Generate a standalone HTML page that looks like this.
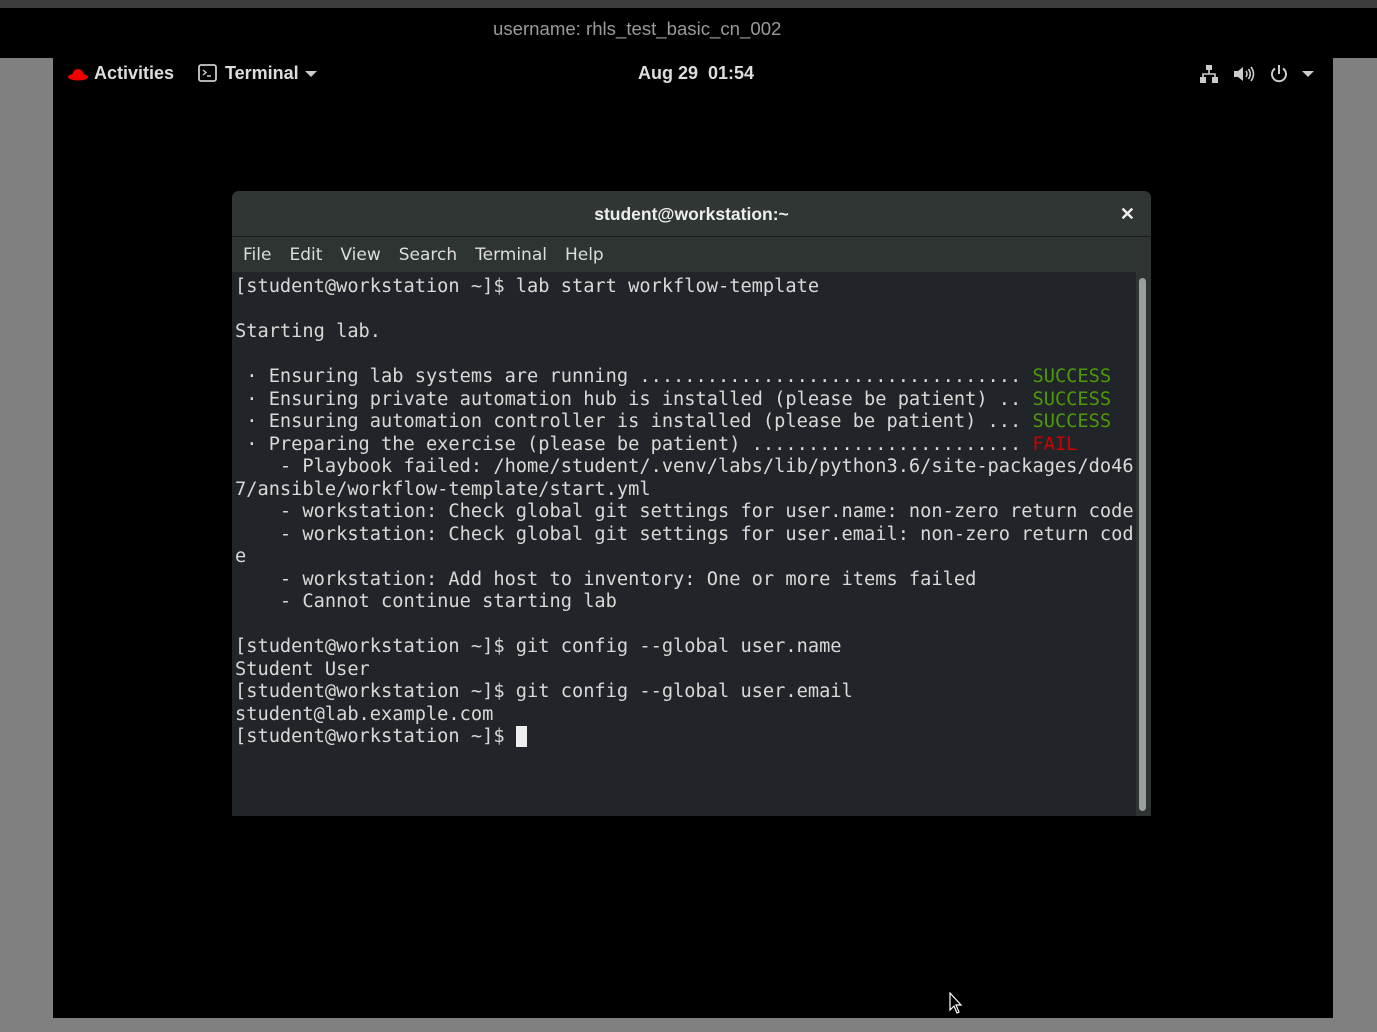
<!DOCTYPE html>
<html><head><meta charset="utf-8"><style>
*{margin:0;padding:0;box-sizing:border-box}
body{width:1377px;height:1032px;background:#808080;position:relative;overflow:hidden;font-family:"DejaVu Sans","Liberation Sans",sans-serif}
#top{position:absolute;left:0;top:0;width:1377px;height:8px;background:#3c3c3c}
#hdr{position:absolute;left:0;top:8px;width:1377px;height:50px;background:#000}
#user{position:absolute;left:493px;top:10px;color:#9a9a9a;font-family:"Liberation Sans",sans-serif;font-size:18.6px}
#screen{position:absolute;left:53px;top:58px;width:1280px;height:960px;background:#000}
.tb{position:absolute;color:#ddd;font-size:18px;font-weight:bold;top:63px;font-family:"Liberation Sans",sans-serif}
#win{position:absolute;left:232px;top:191px;width:919px;height:625px;background:#212529;border-radius:7px 7px 0 0;overflow:hidden}
#title{height:46px;background:#2f3634;border-bottom:1px solid #1c1f1f;text-align:center;color:#eee;font-weight:bold;font-size:17.5px;line-height:46px;font-family:"Liberation Sans",sans-serif}
#menu{height:35px;background:#2d3432;color:#ddd;font-size:17px;line-height:37px;padding-left:11px}
#menu span{margin-right:18px}
#term{position:absolute;left:3px;top:85px;font-family:"DejaVu Sans Mono",monospace;font-size:18.66px;line-height:22.5px;color:#d8dad8;white-space:pre}
.g{color:#4e9a06}.r{color:#cc0000}
#trough{position:absolute;left:904px;top:81px;width:15px;height:544px;background:#2d3432}
#thumb{position:absolute;left:907px;top:87px;width:7px;height:533px;background:#9a9f9c;border-radius:4px}
</style></head><body>
<div id="top"></div><div id="hdr"><div id="user">username: rhls_test_basic_cn_002</div></div>
<div id="screen"></div>
<svg style="position:absolute;left:67px;top:66px" width="22" height="16" viewBox="0 0 22 16"><ellipse cx="11" cy="11" rx="10" ry="3.5" fill="#e00"/><path d="M5 10 Q6 3 11 3 Q16 3 17 10 Z" fill="#e00"/></svg>
<div class="tb" style="left:94px">Activities</div>
<svg style="position:absolute;left:198px;top:64px" width="20" height="19" viewBox="0 0 20 19"><rect x="1" y="1" width="17" height="16" rx="2" fill="none" stroke="#ccc" stroke-width="1.8"/><path d="M5 6 L8 8.5 L5 11 M9 12 H13" stroke="#ccc" stroke-width="1.4" fill="none"/></svg>
<div class="tb" style="left:225px">Terminal</div>
<svg style="position:absolute;left:305px;top:71px" width="12" height="7"><path d="M0 0 H12 L6 6Z" fill="#ccc"/></svg>
<div class="tb" style="left:638px">Aug 29&nbsp; 01:54</div>
<svg style="position:absolute;left:1199px;top:64px" width="20" height="20" viewBox="0 0 20 20"><rect x="7" y="1" width="6" height="5" fill="#ccc"/><rect x="1" y="13" width="6" height="6" fill="#ccc"/><rect x="13" y="13" width="6" height="6" fill="#ccc"/><path d="M10 6V10M4 13V10H16V13" stroke="#ccc" stroke-width="1.6" fill="none"/></svg>
<svg style="position:absolute;left:1233px;top:65px" width="22" height="18" viewBox="0 0 22 18"><path d="M1 6H5L10 2V16L5 12H1Z" fill="#ccc"/><path d="M13 6Q15 9 13 12M15.5 4Q19 9 15.5 14M18 2Q23 9 18 16" stroke="#ccc" stroke-width="1.6" fill="none"/></svg>
<svg style="position:absolute;left:1269px;top:64px" width="20" height="20" viewBox="0 0 20 20"><path d="M6 4.5A7 7 0 1 0 14 4.5" stroke="#ccc" stroke-width="2" fill="none"/><path d="M10 1V10" stroke="#ccc" stroke-width="2"/></svg>
<svg style="position:absolute;left:1302px;top:71px" width="12" height="7"><path d="M0 0 H12 L6 6Z" fill="#ccc"/></svg>
<div id="win">
<div id="title">student@workstation:~<span style="position:absolute;right:16px;top:0;font-size:18px">✕</span></div>
<div id="menu"><span>File</span><span>Edit</span><span>View</span><span>Search</span><span>Terminal</span><span>Help</span></div>
<div id="term">[student@workstation ~]$ lab start workflow-template

Starting lab.

 · Ensuring lab systems are running .................................. <span class="g">SUCCESS</span>
 · Ensuring private automation hub is installed (please be patient) .. <span class="g">SUCCESS</span>
 · Ensuring automation controller is installed (please be patient) ... <span class="g">SUCCESS</span>
 · Preparing the exercise (please be patient) ........................ <span class="r">FAIL</span>
    - Playbook failed: /home/student/.venv/labs/lib/python3.6/site-packages/do46
7/ansible/workflow-template/start.yml
    - workstation: Check global git settings for user.name: non-zero return code
    - workstation: Check global git settings for user.email: non-zero return cod
e
    - workstation: Add host to inventory: One or more items failed
    - Cannot continue starting lab

[student@workstation ~]$ git config --global user.name
Student User
[student@workstation ~]$ git config --global user.email
student@lab.example.com
[student@workstation ~]$ <span style="background:#eee"> </span></div>
<div id="trough"></div><div id="thumb"></div>
</div>
<svg style="position:absolute;left:949px;top:992px" width="14" height="22" viewBox="0 0 14 22"><path d="M1 1V18L5 14L8 21L10 20L7 13H12Z" fill="#000" stroke="#fff" stroke-width="1.2"/></svg>
</body></html>
